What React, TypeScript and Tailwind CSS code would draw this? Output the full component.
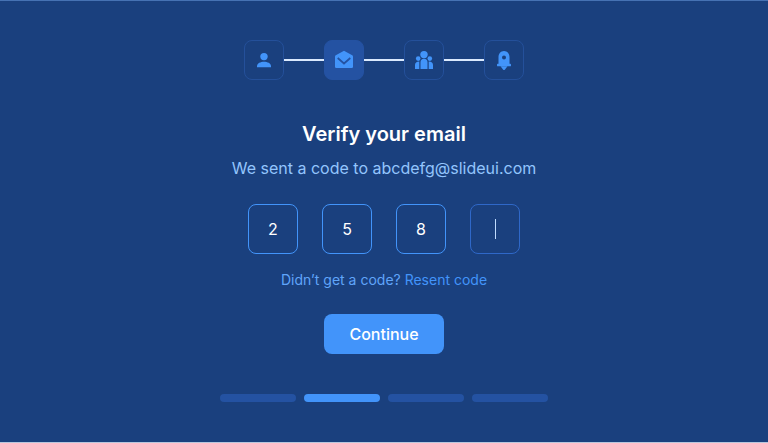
import { Fragment, useState } from "react";
import type { ReactNode } from "react";

type Step = { label: string; icon: ReactNode };

const steps: Step[] = [
  {
    label: "Profile",
    icon: (
      <>
        <circle cx="12" cy="8.6" r="3.7" />
        <path d="M5 19.3v-1.2c0-2.9 3.6-4.4 7-4.4s7 1.500 7 4.400v1.200z" />
      </>
    ),
  },
  {
    label: "Email",
    icon: (
      <>
        <path d="M12 2.700 20.200 7.200q.8.5.8 1.400V18.800q0 1.200-1.200 1.200H4.200Q3 20 3 18.800V8.600q0-.9.8-1.400z" />
        <path d="M5.700 10 12 15.500 18.300 10" fill="none" stroke="#2452a2" strokeWidth="1.700" />
      </>
    ),
  },
  {
    label: "Team",
    icon: (
      <>
        <circle cx="12" cy="6.600" r="3.700" />
        <circle cx="6.200" cy="10.600" r="2.300" />
        <circle cx="17.800" cy="10.600" r="2.300" />
        <path d="M8.500 21v-6.700a3.500 3.500 0 0 1 7 0V21z" />
        <path d="M3 21v-4c0-2.300 1.700-3.700 4.300-3.600V21z" />
        <path d="M21 21v-4c0-2.300-1.700-3.700-4.300-3.600V21z" />
      </>
    ),
  },
  {
    label: "Notifications",
    icon: (
      <>
        <path
          fillRule="evenodd"
          d="M12 3c3.300 0 5.500 2.800 5.500 6.300v6.500h.7q.8 0 .8.900v.7q0 .9-.8.900H5.800q-.8 0-.8-.9v-.7q0-.9.8-.9h.7V9.300C6.500 5.800 8.700 3 12 3zm0 4.500a2 2 0 1 0 0 4 2 2 0 0 0 0-4z"
        />
        <path d="M8.500 18.300h7L13 21.500q-1 1-2 0z" />
      </>
    ),
  },
];

const current = 1;

export default function App() {
  const [code, setCode] = useState(["2", "5", "8", ""]);
  const active = code.indexOf("");

  const update = (index: number, value: string) =>
    setCode(code.map((digit, i) => (i === index ? value.slice(-1) : digit)));

  return (
    <main className="flex min-h-screen flex-col items-center border-t border-b border-t-[#4672b3] border-b-[#b9c7dd] bg-[#1a407e] px-4 pt-[39px] pb-10 font-['Inter',sans-serif]">
      <ol className="flex items-center">
        {steps.map((step, i) => (
          <Fragment key={step.label}>
            {i > 0 && <li aria-hidden="true" className="h-0.5 w-10 bg-[#dbeafe]" />}
            <li
              aria-label={step.label}
              aria-current={i === current ? "step" : undefined}
              className={`flex size-10 items-center justify-center rounded-lg border ${
                i === current ? "border-[#2452a2] bg-[#2452a2]" : "border-[#24509a]"
              }`}
            >
              <svg viewBox="0 0 24 24" className="size-6 fill-[#4294fa]" aria-hidden="true">
                {step.icon}
              </svg>
            </li>
          </Fragment>
        ))}
      </ol>

      <h1 className="mt-10 text-xl leading-7 font-semibold text-white">Verify your email</h1>
      <p className="mt-2 text-base leading-6 text-[#93c5fd]">We sent a code to abcdefg@slideui.com</p>

      <form className="flex flex-col items-center" onSubmit={(event) => event.preventDefault()}>
        <div className="mt-6 flex gap-6">
          {code.map((digit, i) => (
            <label key={i} className="relative block">
              <input
                aria-label={`Digit ${i + 1}`}
                inputMode="numeric"
                value={digit}
                onChange={(event) => update(i, event.target.value)}
                className={`block size-[50px] rounded-lg border bg-transparent text-center text-base text-white caret-transparent outline-none ${
                  i === active ? "border-[#2f68c8]" : "border-[#4294fa]"
                }`}
              />
              {i === active && (
                <span className="pointer-events-none absolute inset-0 m-auto h-5 w-px bg-[#bfdbfe]" />
              )}
            </label>
          ))}
        </div>

        <p className="mt-4 text-sm leading-5 text-[#60a5fa]">
          Didn’t get a code?{" "}
          <a href="#resend" className="text-[#4294fa]">
            Resent code
          </a>
        </p>

        <button type="submit" className="mt-6 h-10 w-[120px] rounded-lg bg-[#4294fa] text-base font-medium text-white">
          Continue
        </button>
      </form>

      <div className="mt-10 flex gap-2" role="progressbar" aria-label="Setup progress" aria-valuemin={1} aria-valuemax={4} aria-valuenow={current + 1}>
        {steps.map((step, i) => (
          <span
            key={step.label}
            className={`h-2 w-[76px] rounded-full ${i === current ? "bg-[#4294fa]" : "bg-[#2452a2]"}`}
          />
        ))}
      </div>
    </main>
  );
}
